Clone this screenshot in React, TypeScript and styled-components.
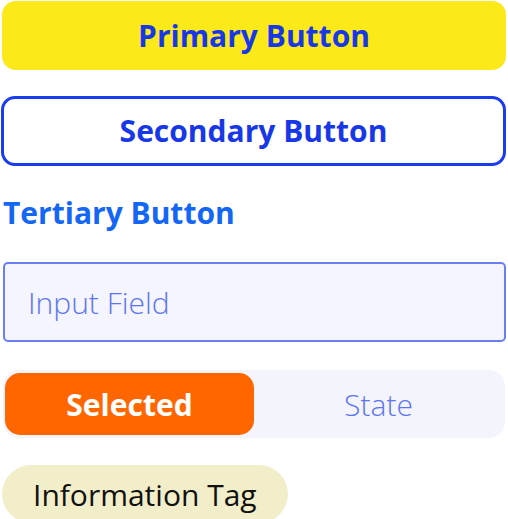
import styled, { createGlobalStyle } from 'styled-components'

const GlobalStyle = createGlobalStyle`
  body {
    margin: 0;
    background: #ffffff;
    font-family: 'Open Sans', 'Liberation Sans', sans-serif;
  }
`

const Page = styled.div`
  width: 504px;
  padding: 1px 2px 0 2px;
  display: flex;
  flex-direction: column;
`

const PrimaryButton = styled.button`
  height: 69px;
  border: none;
  border-radius: 14px;
  background: #fce91a;
  color: #1838e8;
  font-family: 'Open Sans', sans-serif;
  font-weight: 700;
  font-size: 30px;
  margin-bottom: 26px;
`

const SecondaryButton = styled.button`
  height: 70px;
  margin-left: -1px;
  border: 3px solid #1a3cf0;
  border-radius: 14px;
  background: #ffffff;
  color: #1838e8;
  font-family: 'Open Sans', sans-serif;
  font-weight: 700;
  font-size: 30px;
  padding-bottom: 3px;
  margin-bottom: 26px;
`

const TertiaryButton = styled.button`
  align-self: flex-start;
  padding: 0 0 0 1px;
  border: none;
  background: none;
  color: #1466f4;
  font-family: 'Open Sans', sans-serif;
  font-weight: 700;
  font-size: 30px;
  line-height: 42px;
  margin-bottom: 28px;
`

const InputField = styled.input`
  height: 80px;
  box-sizing: border-box;
  margin-left: 1px;
  width: 503px;
  padding: 0 0 0 23px;
  border: 2px solid #6a7ff6;
  border-radius: 5px;
  background: #f4f5fe;
  font-family: 'Open Sans', sans-serif;
  font-weight: 300;
  font-size: 30px;
  outline: none;
  margin-bottom: 28px;

  &::placeholder {
    color: #5d74f2;
  }
`

const Segmented = styled.div`
  height: 68px;
  box-sizing: border-box;
  margin-left: 1px;
  width: 502px;
  padding: 3px 2px;
  border-radius: 16px;
  background: #f4f4fd;
  display: flex;
  margin-bottom: 27px;
`

const Segment = styled.button<{ $active?: boolean }>`
  flex: 1;
  border: none;
  border-radius: 15px;
  background: ${p => (p.$active ? '#ff6600' : 'transparent')};
  color: ${p => (p.$active ? '#ffffff' : '#5d74f2')};
  font-family: 'Open Sans', sans-serif;
  font-weight: ${p => (p.$active ? 700 : 300)};
  font-size: 30px;
`

const Tag = styled.span`
  align-self: flex-start;
  height: 58px;
  padding: 0 31px;
  border-radius: 29px;
  background: #f1eec9;
  color: #111111;
  display: flex;
  align-items: center;
  font-size: 30px;
  font-weight: 400;
`

export default function App() {
  return (
    <Page>
      <GlobalStyle />
      <PrimaryButton>Primary Button</PrimaryButton>
      <SecondaryButton>Secondary Button</SecondaryButton>
      <TertiaryButton>Tertiary Button</TertiaryButton>
      <InputField placeholder="Input Field" />
      <Segmented>
        <Segment $active>Selected</Segment>
        <Segment>State</Segment>
      </Segmented>
      <Tag>Information Tag</Tag>
    </Page>
  )
}
